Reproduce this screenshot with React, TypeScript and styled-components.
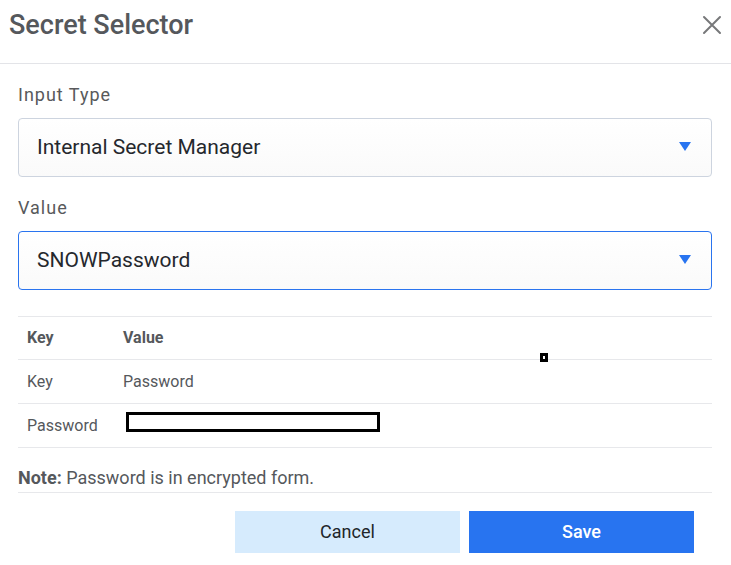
import React, { useState } from "react";
import styled, { createGlobalStyle } from "styled-components";

const GlobalStyle = createGlobalStyle`
  *, *::before, *::after { box-sizing: border-box; }
  body {
    margin: 0;
    background: #fff;
    color: #55585c;
    font-family: Roboto, "Liberation Sans", sans-serif;
  }
  button, select { font-family: inherit; }
`;

const Header = styled.header`
  display: flex;
  align-items: flex-start;
  justify-content: space-between;
  padding: 9px 9px 21px;
  border-bottom: 1px solid #e3e4e8;
`;

const Title = styled.h1`
  margin: 0;
  font-size: 27px;
  line-height: 33px;
  font-weight: 500;
`;

const CloseButton = styled.button`
  display: flex;
  padding: 6px 0 0;
  border: 0;
  background: none;
  color: #77787a;
  cursor: pointer;
`;

const Form = styled.form`
  padding: 19px 19px 12px 18px;
`;

const Field = styled.div`
  display: flex;
  flex-direction: column;
  gap: 11px;
  margin-bottom: 19px;
`;

const Label = styled.label`
  color: #58595b;
  font-size: 18px;
  line-height: 24px;
  letter-spacing: 1px;
`;

const SelectWrap = styled.div`
  position: relative;
`;

const Select = styled.select<{ $active?: boolean }>`
  display: block;
  width: 100%;
  height: 59px;
  padding: 0 48px 2px 18px;
  border: 1px solid ${(p) => (p.$active ? "#2a74ef" : "#cdd4df")};
  border-radius: 4px;
  outline: none;
  appearance: none;
  background: linear-gradient(#fff, #fafafa);
  color: #25282d;
  font-size: 21px;
`;

const Arrow = styled.svg`
  position: absolute;
  top: 24px;
  right: 21px;
  fill: #2874f0;
  pointer-events: none;
`;

const TableWrap = styled.div`
  position: relative;
  margin-top: 26px;
`;

const Table = styled.table`
  width: 100%;
  border-collapse: collapse;
  border-top: 1px solid #e7e8eb;
  font-size: 16px;
  line-height: 20px;
  text-align: left;
`;

const Row = styled.tr<{ $head?: boolean }>`
  height: ${(p) => (p.$head ? 43 : 44)}px;
  border-bottom: 1px solid #e7e8eb;
`;

const cell = `
  padding: 0 9px;
  &:first-child { width: 96px; }
`;
const HeadCell = styled.th`${cell}`;
const Cell = styled.td`${cell}`;

const Redaction = styled.div`
  width: 254px;
  height: 20px;
  margin: 0 0 8px 3px;
  border: 3px solid #000;
  background: #fff;
`;

const Marker = styled.span`
  position: absolute;
  top: 37px;
  left: 522px;
  width: 8px;
  height: 9px;
  border: 3px solid #000;
  background: #fff;
`;

const Note = styled.p`
  margin: 0;
  padding: 18px 0 2px;
  border-bottom: 1px solid #e7e8eb;
  font-size: 18px;
  line-height: 24px;
`;

const Actions = styled.div`
  display: flex;
  justify-content: flex-end;
  gap: 9px;
  padding: 18px 18px 0 0;
`;

const Button = styled.button<{ $primary?: boolean }>`
  width: 225px;
  height: 42px;
  padding: 0 0 1px;
  border: 0;
  background: ${(p) => (p.$primary ? "#2874f0" : "#d6ebfd")};
  color: ${(p) => (p.$primary ? "#fff" : "#212529")};
  font-size: 18px;
  font-weight: ${(p) => (p.$primary ? 500 : 400)};
  cursor: pointer;
`;

interface DropdownProps {
  id: string;
  label: string;
  option: string;
  active?: boolean;
}

function Dropdown({ id, label, option, active }: DropdownProps) {
  const [value, setValue] = useState(option);
  return (
    <Field>
      <Label htmlFor={id}>{label}</Label>
      <SelectWrap>
        <Select id={id} $active={active} value={value} onChange={(e) => setValue(e.target.value)}>
          <option>{option}</option>
        </Select>
        <Arrow width="12" height="9" viewBox="0 0 12 9" aria-hidden="true">
          <path d="M0 0H12L6 9Z" />
        </Arrow>
      </SelectWrap>
    </Field>
  );
}

export default function App() {
  return (
    <main>
      <GlobalStyle />
      <Header>
        <Title>Secret Selector</Title>
        <CloseButton type="button" aria-label="Close">
          <svg width="20" height="20" viewBox="0 0 20 20" fill="none" stroke="currentColor" strokeWidth="2" strokeLinecap="round">
            <path d="M2 2L18 18M18 2L2 18" />
          </svg>
        </CloseButton>
      </Header>
      <Form onSubmit={(e) => e.preventDefault()}>
        <Dropdown id="input-type" label="Input Type" option="Internal Secret Manager" />
        <Dropdown id="value" label="Value" option="SNOWPassword" active />
        <TableWrap>
          <Table>
            <thead>
              <Row $head>
                <HeadCell scope="col">Key</HeadCell>
                <HeadCell scope="col">Value</HeadCell>
              </Row>
            </thead>
            <tbody>
              <Row>
                <Cell>Key</Cell>
                <Cell>Password</Cell>
              </Row>
              <Row>
                <Cell>Password</Cell>
                <Cell><Redaction /></Cell>
              </Row>
            </tbody>
          </Table>
          <Marker />
        </TableWrap>
        <Note><strong>Note:</strong> Password is in encrypted form.</Note>
        <Actions>
          <Button type="button">Cancel</Button>
          <Button type="submit" $primary>Save</Button>
        </Actions>
      </Form>
    </main>
  );
}
